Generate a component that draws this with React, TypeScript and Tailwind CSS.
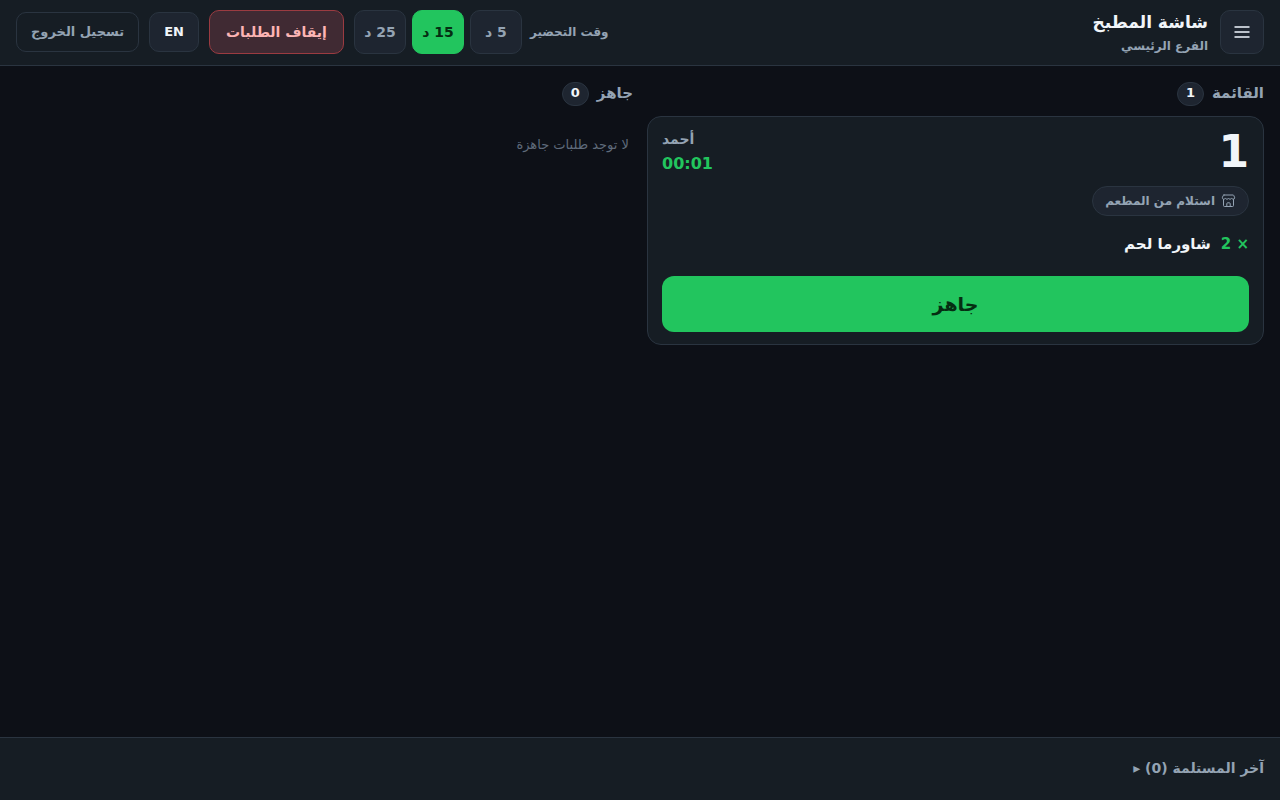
import React, { useState } from 'react';

interface OrderItem {
  name: string;
  qty: number;
}

interface Order {
  number: number;
  customer: string;
  elapsed: string;
  items: OrderItem[];
}

const PREP_TIMES = [5, 15, 25];

const QUEUE: Order[] = [
  { number: 1, customer: 'أحمد', elapsed: '00:01', items: [{ name: 'شاورما لحم', qty: 2 }] },
];

function MenuIcon() {
  return (
    <svg width="20" height="20" viewBox="0 0 20 20" fill="none" stroke="currentColor" strokeWidth="2" aria-hidden="true">
      <path d="M2.500 5h15M2.500 10h15M2.500 15h15" />
    </svg>
  );
}

function StoreIcon() {
  return (
    <svg width="15" height="15" viewBox="0 0 15 15" fill="none" stroke="currentColor" strokeLinecap="round" strokeLinejoin="round" aria-hidden="true">
      <path d="M3 1h9a.9.9 0 0 1 .8.5l.9 2.300c0 .9-.6 1.400-1.500 1.400s-1.300-.5-1.600-.9c-.4.5-.8.9-1.600.9s-1.200-.4-1.500-.9c-.3.5-.7.9-1.500.9s-1.200-.4-1.600-.9c-.3.4-.7.9-1.600.9S1.300 4.700 1.300 3.800L2.200 1.500A.9.9 0 0 1 3 1z" />
      <path d="M2.500 5.500v6a1 1 0 0 0 1 1h8a1 1 0 0 0 1-1v-6" />
      <path d="M5.800 12.300V9.700a.9.9 0 0 1 .9-.9h1.600a.9.9 0 0 1 .9.9v2.600" />
    </svg>
  );
}

function ColumnTitle({ title, count }: { title: string; count: number }) {
  return (
    <div className="mb-[10px] flex h-6 items-start gap-2">
      <h2 className="text-[15px] leading-[22px] font-bold text-[#94a3b3]">{title}</h2>
      <span className="h-6 rounded-full border border-[#2a3440] bg-[#1e2530] px-2 text-[13px] leading-5 font-bold text-[#f1f5f9]">
        {count}
      </span>
    </div>
  );
}

function OrderCard({ order }: { order: Order }) {
  return (
    <article className="rounded-[14px] border border-[#2a3440] bg-[#161d24] px-[14px] py-3">
      <div className="flex items-start justify-between">
        <span className="text-[44px] leading-[46px] font-bold text-[#f1f5f9]">{order.number}</span>
        <div className="flex flex-col gap-1 text-left">
          <span className="text-sm leading-5 font-bold text-[#94a3b3]">{order.customer}</span>
          <span className="text-base leading-[22px] font-bold text-[#22c55e]">{order.elapsed}</span>
        </div>
      </div>

      <span className="mt-[11px] inline-flex h-[30px] items-center gap-[6px] rounded-full border border-[#2a3440] bg-[#1e2530] px-3 text-xs font-bold text-[#94a3b3]">
        <StoreIcon />
        استلام من المطعم
      </span>

      <ul className="mt-3">
        {order.items.map((item) => (
          <li key={item.name} className="flex gap-[10px] text-[15px] leading-8 font-bold text-[#f1f5f9]">
            <span className="text-[#22c55e]">× {item.qty}</span>
            <span>{item.name}</span>
          </li>
        ))}
      </ul>

      <button className="mt-4 h-14 w-full rounded-xl bg-[#22c55e] text-[19px] font-bold text-[#052e12]">
        جاهز
      </button>
    </article>
  );
}

export default function App() {
  const [prep, setPrep] = useState(15);

  return (
    <div
      dir="rtl"
      lang="ar"
      className="flex min-h-screen flex-col bg-[#0d1017] font-['DejaVu_Sans',sans-serif] text-[#f1f5f9]"
    >
      <header className="flex items-start justify-between border-b border-[#2a3440] bg-[#161d24] px-4 pt-[10px] pb-[11px]">
        <div className="flex items-center gap-3">
          <button
            aria-label="القائمة"
            className="flex h-11 w-11 items-center justify-center rounded-[10px] border border-[#2a3440] bg-[#1e2530] text-[#bcc2cb]"
          >
            <MenuIcon />
          </button>
          <div>
            <h1 className="text-[17px] leading-6 font-bold">شاشة المطبخ</h1>
            <p className="mt-1 text-xs leading-4 font-bold text-[#94a3b3]">الفرع الرئيسي</p>
          </div>
        </div>

        <div className="flex items-center gap-[10px]">
          <div className="flex items-center gap-[6px]" role="group" aria-labelledby="prep-label">
            <span id="prep-label" className="ml-[2px] text-xs font-bold text-[#94a3b3]">
              وقت التحضير
            </span>
            {PREP_TIMES.map((min) => (
              <button
                key={min}
                onClick={() => setPrep(min)}
                aria-pressed={prep === min}
                className={`h-11 w-13 rounded-[10px] border text-sm font-bold ${
                  prep === min
                    ? 'border-[#22c55e] bg-[#22c55e] text-[#052e12]'
                    : 'border-[#2a3440] bg-[#1e2530] text-[#94a3b3]'
                }`}
              >
                {min} د
              </button>
            ))}
          </div>
          <button className="h-11 rounded-[10px] border border-[#9b3b41] bg-[#402a33] px-4 text-sm font-bold text-[#fcb4b4]">
            إيقاف الطلبات
          </button>
          <button className="h-10 rounded-[10px] border border-[#2a3440] bg-[#1e2530] px-[14px] text-[13px] font-bold">
            EN
          </button>
          <button className="h-10 rounded-[10px] border border-[#2a3440] px-[14px] text-[13px] font-bold text-[#94a3b3]">
            تسجيل الخروج
          </button>
        </div>
      </header>

      <main className="grid flex-1 grid-cols-2 gap-[14px] p-4">
        <section>
          <ColumnTitle title="القائمة" count={QUEUE.length} />
          {QUEUE.map((order) => (
            <OrderCard key={order.number} order={order} />
          ))}
        </section>
        <section>
          <ColumnTitle title="جاهز" count={0} />
          <p className="px-1 py-[18px] text-[13px] leading-[22px] text-[#5f6b7b]">لا توجد طلبات جاهزة</p>
        </section>
      </main>

      <footer className="border-t border-[#2a3440] bg-[#161d24] px-4 pt-2 pb-[10px]">
        <button className="h-11 text-sm font-bold text-[#94a3b3]">آخر المستلمة (0) ▸</button>
      </footer>
    </div>
  );
}
